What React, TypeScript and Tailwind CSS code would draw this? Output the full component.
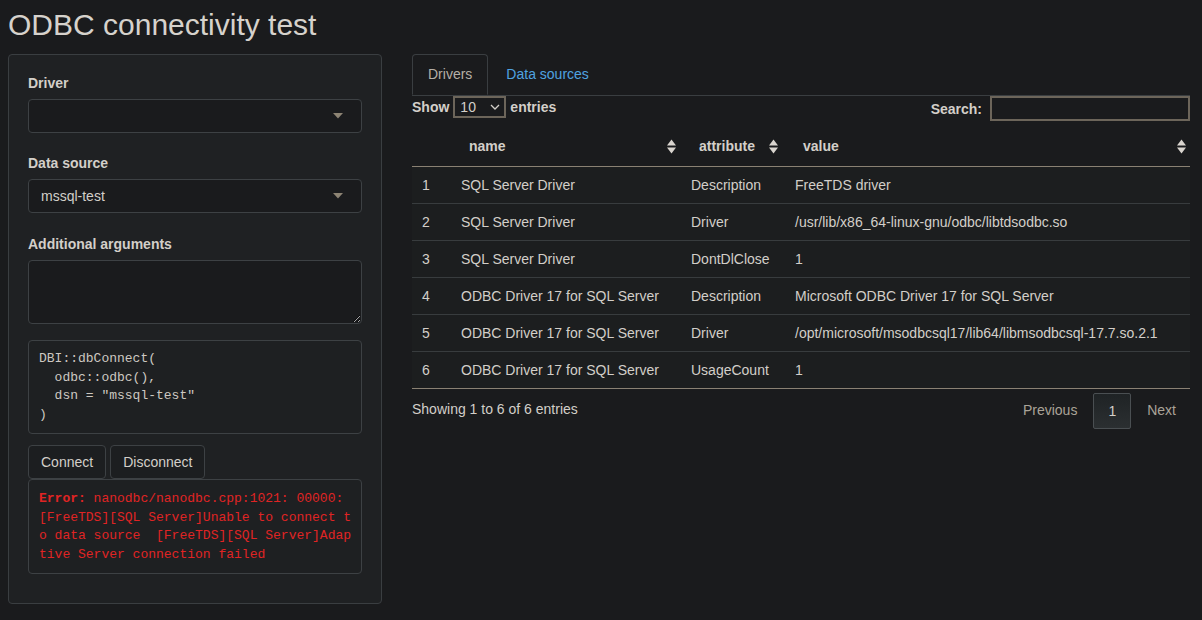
import React from "react";

const rows = [
  { n: 1, name: "SQL Server Driver", attribute: "Description", value: "FreeTDS driver" },
  { n: 2, name: "SQL Server Driver", attribute: "Driver", value: "/usr/lib/x86_64-linux-gnu/odbc/libtdsodbc.so" },
  { n: 3, name: "SQL Server Driver", attribute: "DontDlClose", value: "1" },
  { n: 4, name: "ODBC Driver 17 for SQL Server", attribute: "Description", value: "Microsoft ODBC Driver 17 for SQL Server" },
  { n: 5, name: "ODBC Driver 17 for SQL Server", attribute: "Driver", value: "/opt/microsoft/msodbcsql17/lib64/libmsodbcsql-17.7.so.2.1" },
  { n: 6, name: "ODBC Driver 17 for SQL Server", attribute: "UsageCount", value: "1" },
];

const SortIcon = () => (
  <svg width="9" height="15" viewBox="0 0 9 15" className="shrink-0">
    <polygon points="0,6.5 4.5,0.5 9,6.5" fill="#d9d5cf" />
    <polygon points="0,8.5 4.5,14.5 9,8.5" fill="#d9d5cf" />
  </svg>
);

const Caret = () => (
  <svg width="10" height="6" viewBox="0 0 10 6">
    <polygon points="0,0 10,0 5,5.5" fill="#8d8474" />
  </svg>
);

const SelectBox = ({ value }: { value?: string }) => (
  <div className="flex h-[34px] items-center justify-between rounded-[4px] border border-[#3d4144] bg-[#1a1b1d] pl-[12px] pr-[18px]">
    <span>{value}</span>
    <Caret />
  </div>
);

export default function App() {
  return (
    <div className="min-h-[620px] bg-[#1a1b1d] px-2 font-['Liberation_Sans',Arial,sans-serif] text-[14px] leading-[20px] text-[#d3cfc9]">
      <h2 className="pt-2 text-[30px] leading-[33px] text-[#d6d2cc]">ODBC connectivity test</h2>

      <div className="mt-[13px] flex items-start">
        {/* sidebar */}
        <div className="w-[374px] rounded-[4px] border border-[#3a3e41] bg-[#1f2123] px-[19px] pt-[18px] pb-[29px]">
          <label className="mb-[6px] block font-bold">Driver</label>
          <SelectBox />
          <label className="mt-[20px] mb-[6px] block font-bold">Data source</label>
          <SelectBox value="mssql-test" />
          <label className="mt-[21px] mb-[6px] block font-bold">Additional arguments</label>
          <textarea className="block h-[64px] w-full resize-y rounded-[4px] border border-[#3d4144] bg-[#1a1b1d] outline-none" />

          <pre className="mt-[16px] rounded-[4px] border border-[#3d4144] bg-[#1e2022] px-[10px] py-[9px] font-['Liberation_Mono','Courier_New',monospace] text-[13px] leading-[18.57px] text-[#cdc8c1]">
            {"DBI::dbConnect(\n  odbc::odbc(),\n  dsn = \"mssql-test\"\n)"}
          </pre>

          <div className="mt-[11px] flex gap-[4px]">
            <button className="h-[34px] rounded-[4px] border border-[#3d4144] bg-[#1c1e20] px-[12px] text-[#d3cfc9]">Connect</button>
            <button className="h-[34px] rounded-[4px] border border-[#3d4144] bg-[#1c1e20] px-[12px] text-[#d3cfc9]">Disconnect</button>
          </div>

          <pre className="rounded-[4px] border border-[#3d4144] bg-[#1e2022] px-[10px] pt-[10px] pb-[8px] font-['Liberation_Mono','Courier_New',monospace] text-[13px] leading-[18.57px] text-[#e02424]">
            <b>Error: </b>
            {"nanodbc/nanodbc.cpp:1021: 00000:\n[FreeTDS][SQL Server]Unable to connect t\no data source  [FreeTDS][SQL Server]Adap\ntive Server connection failed"}
          </pre>
        </div>

        {/* main */}
        <div className="ml-[30px] w-[778px]">
          <div className="flex border-b border-[#3a3e41]">
            <div className="-mb-px h-[41px] rounded-t-[4px] border border-[#3a3e41] border-b-transparent bg-[#1a1b1d] px-[15px] pt-[9px] text-[#b5afa6]">
              Drivers
            </div>
            <div className="ml-[2px] h-[41px] border border-transparent px-[15px] pt-[9px] text-[#4fa3e0]">Data sources</div>
          </div>

          <div className="flex h-[26px] items-start justify-between">
            <div className="flex items-center font-bold">
              <span>Show</span>
              <div className="mx-[4px] flex h-[22px] w-[53px] items-center justify-between border-2 border-[#6c655a] bg-[#1a1b1d] pl-[5px] pr-[4px] font-normal">
                <span>10</span>
                <svg width="10" height="6" viewBox="0 0 10 6">
                  <polyline points="1,1 5,5 9,1" fill="none" stroke="#d3cfc9" strokeWidth="1.3" />
                </svg>
              </div>
              <span>entries</span>
            </div>
            <div className="flex items-center font-bold">
              <span>Search:</span>
              <div className="ml-[8px] h-[25px] w-[200px] border-2 border-[#6c655a] bg-[#1a1b1d]" />
            </div>
          </div>

          <div className="mt-[4px]">
            <div className="grid h-[41px] grid-cols-[39px_230px_104px_1fr] border-b border-[#8a8173] font-bold">
              <div />
              <div className="flex items-center justify-between pl-[18px] pr-[5px]"><span>name</span><SortIcon /></div>
              <div className="flex items-center justify-between pl-[18px] pr-[7px]"><span>attribute</span><SortIcon /></div>
              <div className="flex items-center justify-between pl-[18px] pr-[4px]"><span>value</span><SortIcon /></div>
            </div>
            {rows.map((r, i) => (
              <div
                key={r.n}
                className={
                  "grid h-[37px] grid-cols-[39px_230px_104px_1fr] items-center border-b bg-[#1c1e1f] " +
                  (i === rows.length - 1 ? "border-[#8a8173]" : "border-[#383c3e]")
                }
              >
                <div className="pl-[10px]">{r.n}</div>
                <div className="pl-[10px]">{r.name}</div>
                <div className="pl-[10px]">{r.attribute}</div>
                <div className="pl-[10px]">{r.value}</div>
              </div>
            ))}
          </div>

          <div className="flex items-start justify-between">
            <div className="pt-[10px]">Showing 1 to 6 of 6 entries</div>
            <div className="flex items-center pt-[4px]">
              <span className="px-[14px] pt-[6px] pb-[8px] text-[#aaa398]">Previous</span>
              <span className="ml-[2px] rounded-[2px] border border-[#4a4f52] bg-gradient-to-b from-[#1f2325] to-[#2b2f31] px-[14px] py-[7px]">1</span>
              <span className="ml-[2px] px-[14px] pt-[6px] pb-[8px] text-[#aaa398]">Next</span>
            </div>
          </div>
        </div>
      </div>
    </div>
  );
}
